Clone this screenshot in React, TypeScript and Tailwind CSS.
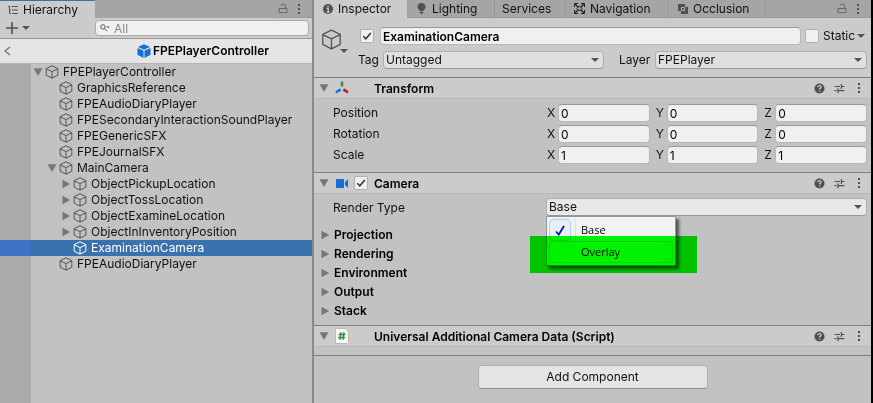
import { useState } from "react";
import type { ReactNode } from "react";

type IconProps = { className?: string };

function CubeIcon({ className = "" }: IconProps) {
  return (
    <svg viewBox="0 0 14 14" fill="none" stroke="currentColor" strokeLinejoin="round" className={"shrink-0 " + className}>
      <path d="M7 0.8 12.8 3.6V10.2L7 13.2 1.2 10.2V3.6ZM1.2 3.8 7 6.6 12.8 3.8M7 6.6V13" />
    </svg>
  );
}

function PrefabIcon() {
  return (
    <svg viewBox="0 0 14 14" className="size-3.5 shrink-0">
      <path d="M7 0.3 13 3 7 5.8 1 3ZM0.5 4 6.5 6.7V14L0.5 10.8ZM13.5 4 7.5 6.7V14L13.5 10.8Z" fill="#1470d0" />
    </svg>
  );
}

function Caret({ className = "" }: IconProps) {
  return (
    <svg viewBox="0 0 8 4" className={"h-1 w-2 shrink-0 " + className}>
      <path d="M0 0H8L4 4Z" fill="#555" />
    </svg>
  );
}

function Triangle({ open, className = "" }: { open: boolean; className?: string }) {
  return (
    <svg viewBox="0 0 10 10" className={"size-2.5 shrink-0 " + className}>
      <path d={open ? "M0.5 1.2H9.5L5 9Z" : "M1.5 0.8V9.2L9.2 5Z"} fill="#777" />
    </svg>
  );
}

function LockIcon() {
  return (
    <svg viewBox="0 0 10 11" fill="none" stroke="#666" className="h-[11px] w-2.5">
      <path d="M1 5.5H9V9.7H1ZM7.6 5.5V3Q7.6 1 5.4 1 3.4 1 3.2 2.6" />
    </svg>
  );
}

function DotsIcon() {
  return (
    <svg viewBox="0 0 4 12" fill="#505050" className="h-3 w-1">
      <path d="M1 1H3V3H1ZM1 5H3V7H1ZM1 9H3V11H1Z" />
    </svg>
  );
}

function HelpIcon() {
  return (
    <svg viewBox="0 0 11 11" className="size-[11px]">
      <circle cx="5.5" cy="5.5" r="5" fill="#505050" />
      <path d="M3.8 4.2Q3.9 2.7 5.5 2.7 7.2 2.7 7.2 4.1 7.2 5 5.6 5.6V6.6M5.6 7.6V8.7" fill="none" stroke="#cbcbcb" strokeWidth="1.2" />
    </svg>
  );
}

function PresetIcon() {
  return (
    <svg viewBox="0 0 11 11" fill="none" stroke="#505050" strokeWidth="1.2" className="size-[11px]">
      <path d="M0.5 3.5H6M9 3.5H10.5M7.4 1V6M7.4 3.5H9M0.5 7.7H2.5M4 7.7H10.5M4 5.2V10.2" />
    </svg>
  );
}

function IconButton({ label, className = "", children }: { label: string; className?: string; children: ReactNode }) {
  return (
    <button type="button" aria-label={label} className={"flex items-center justify-center " + className}>
      {children}
    </button>
  );
}

type Node = { name: string; depth: number; fold?: "open" | "closed"; selected?: boolean };

const nodes: Node[] = [
  { name: "FPEPlayerController", depth: 0, fold: "open" },
  { name: "GraphicsReference", depth: 1 },
  { name: "FPEAudioDiaryPlayer", depth: 1 },
  { name: "FPESecondaryInteractionSoundPlayer", depth: 1 },
  { name: "FPEGenericSFX", depth: 1 },
  { name: "FPEJournalSFX", depth: 1 },
  { name: "MainCamera", depth: 1, fold: "open" },
  { name: "ObjectPickupLocation", depth: 2, fold: "closed" },
  { name: "ObjectTossLocation", depth: 2, fold: "closed" },
  { name: "ObjectExamineLocation", depth: 2, fold: "closed" },
  { name: "ObjectInInventoryPosition", depth: 2, fold: "closed" },
  { name: "ExaminationCamera", depth: 2, selected: true },
  { name: "FPEAudioDiaryPlayer", depth: 1 },
];

const indents = ["pl-0", "pl-3.5", "pl-7"];

function TreeRow({ node }: { node: Node }) {
  return (
    <li className={"flex h-4 " + (node.selected ? "bg-[#3a72b0] text-white" : "")}>
      <span className={"w-[31px] shrink-0 " + (node.selected ? "bg-[#3c73c4]" : "bg-[#aaaaaa]")} />
      <span className={"flex items-center whitespace-nowrap " + indents[node.depth]}>
        <span className="flex w-3.5 justify-end">{node.fold && <Triangle open={node.fold === "open"} className="mr-0.5" />}</span>
        <CubeIcon className={"mr-1 size-3.5 " + (node.selected ? "text-white" : "text-[#555]")} />
        {node.name}
      </span>
    </li>
  );
}

function Hierarchy() {
  return (
    <section className="flex w-[314px] shrink-0 flex-col border-r-2 border-[#8a8a8a] bg-[#c2c2c2]">
      <header className="flex h-[18px] items-stretch bg-[#a5a5a5]">
        <button type="button" className="flex w-[95px] items-center gap-[5px] border-t border-[#3a72b0] bg-[#cbcbcb] pl-2">
          <svg viewBox="0 0 10 10" fill="none" stroke="#555" className="size-2.5">
            <path d="M0 1.5H2M3.5 1.5H10M1.5 2V8.5H3M4 5H10M4 8.5H10M1.5 5H3" />
          </svg>
          Hierarchy
        </button>
        <div className="ml-auto flex items-center gap-[9px] border-b border-[#999] pr-[11px]">
          <IconButton label="Lock"><LockIcon /></IconButton>
          <IconButton label="Hierarchy options"><DotsIcon /></IconButton>
        </div>
      </header>
      <div className="flex h-[21px] items-center border-b border-[#999] bg-[#cbcbcb] pr-[3px] pl-1.5">
        <button type="button" aria-label="Create" className="flex w-[89px] items-center gap-1">
          <svg viewBox="0 0 12 12" stroke="#505050" strokeWidth="1.6" className="size-3">
            <path d="M6 0V12M0 6H12" />
          </svg>
          <Caret />
        </button>
        <label className="flex h-4 min-w-0 flex-1 items-center gap-1 rounded border border-[#aaa] bg-[#f0f0f0] px-1">
          <svg viewBox="0 0 10 8" fill="none" stroke="#555" className="h-2 w-2.5 shrink-0">
            <circle cx="2.9" cy="2.9" r="2.2" />
            <path d="M4.5 4.5 7 7.3" />
            <path d="M6.5 2.5H9.8L8.2 4.2Z" fill="#555" stroke="none" />
          </svg>
          <input aria-label="Search hierarchy" placeholder="All" className="min-w-0 flex-1 bg-transparent text-xs leading-3 outline-none placeholder:text-[#888]" />
        </label>
      </div>
      <div className="flex h-[25px] items-center border-b border-[#b5b5b5] bg-[#e5e5e5] pl-1 font-semibold text-black">
        <button type="button" aria-label="Back" className="w-[90px]">
          <svg viewBox="0 0 7 10" fill="none" stroke="#777" strokeWidth="1.3" className="h-2.5 w-[7px]">
            <path d="M6 1 1 5 6 9" />
          </svg>
        </button>
        <div className="flex flex-1 items-center justify-center gap-0.5">
          <PrefabIcon />
          FPEPlayerController
        </div>
      </div>
      <ul>
        {nodes.map((n, i) => (
          <TreeRow key={i} node={n} />
        ))}
      </ul>
      <div className="w-[31px] flex-1 bg-[#aaaaaa]" />
    </section>
  );
}

function CheckBox({ label, defaultChecked = false }: { label: string; defaultChecked?: boolean }) {
  return (
    <span className="grid size-3.5 shrink-0">
      <input
        type="checkbox"
        aria-label={label}
        defaultChecked={defaultChecked}
        className="peer col-start-1 row-start-1 size-3.5 appearance-none rounded-xs border border-[#b0b0b0] bg-[#f0f0f0]"
      />
      <svg viewBox="0 0 14 14" fill="none" stroke="#333" strokeWidth="1.5" className="pointer-events-none invisible col-start-1 row-start-1 size-3.5 peer-checked:visible">
        <path d="M3.3 7.2 5.8 9.8 10.8 4" />
      </svg>
    </span>
  );
}

function DropDown({ id, value, options, tone }: { id: string; value: string; options: string[]; tone: string }) {
  return (
    <span className="grid min-w-0 flex-1 items-center">
      <select
        id={id}
        defaultValue={value}
        className={"col-start-1 row-start-1 h-[18px] w-full appearance-none rounded-sm border border-[#b0b0b0] border-b-[#989898] pr-5 pl-0.5 leading-4 " + tone}
      >
        {options.map((o) => (
          <option key={o}>{o}</option>
        ))}
      </select>
      <Caret className="pointer-events-none col-start-1 row-start-1 mr-[5px] justify-self-end" />
    </span>
  );
}

function Tab({ icon, label, className }: { icon?: ReactNode; label: string; className: string }) {
  return (
    <button type="button" className={"flex shrink-0 items-center whitespace-nowrap " + className}>
      {icon}
      {label}
    </button>
  );
}

function InspectorTabs() {
  return (
    <header className="flex h-[18px] items-stretch bg-[#a5a5a5]">
      <Tab
        label="Inspector"
        className="w-[93px] gap-[5px] bg-[#cbcbcb] pl-[9px]"
        icon={
          <svg viewBox="0 0 10 10" className="size-2.5">
            <circle cx="5" cy="5" r="5" fill="#505050" />
            <path d="M5 1.5V3.2M3.8 4.5H5.2V8M3.7 8H6.5" fill="none" stroke="#cbcbcb" strokeWidth="1.3" />
          </svg>
        }
      />
      <Tab
        label="Lighting"
        className="w-[88px] gap-1.5 border-r border-b border-[#999] pl-2.5"
        icon={
          <svg viewBox="0 0 9 11" fill="#505050" className="h-[11px] w-[9px]">
            <path d="M4.5 0A3.8 3.8 0 0 1 6.4 7.2V8.2H2.6V7.2A3.8 3.8 0 0 1 4.5 0ZM2.8 9H6.2V10H5.5V11H3.5V10H2.8Z" />
          </svg>
        }
      />
      <Tab label="Services" className="w-[71px] border-r border-b border-[#999] pl-[7px]" />
      <Tab
        label="Navigation"
        className="w-[102px] gap-[5px] border-r border-b border-[#999] pl-2"
        icon={
          <svg viewBox="0 0 11 11" fill="none" stroke="#222" className="size-[11px]">
            <path d="M1 1 10 10M10 1 1 10" strokeWidth="1.3" />
            <path d="M0.5 4V0.5H4M7 0.5H10.5V4M10.5 7V10.5H7M4 10.5H0.5V7" />
            <path d="M5.5 3 8 5.5 5.5 8 3 5.5Z" fill="#a5a5a5" />
          </svg>
        }
      />
      <Tab
        label="Occlusion"
        className="w-[98px] gap-[5px] border-r border-b border-[#999] pl-2.5"
        icon={
          <svg viewBox="0 0 10 10" className="size-2.5">
            <path d="M0 0H7V3H10V10H3V7H0Z" fill="#505050" />
            <path d="M3.5 6.5V3.5H6.5V6.5Z" fill="#505050" stroke="#b5b5b5" />
          </svg>
        }
      />
      <div className="flex flex-1 items-center justify-end gap-[9px] border-b border-[#999] pr-[11px]">
        <IconButton label="Lock inspector"><LockIcon /></IconButton>
        <IconButton label="Inspector options"><DotsIcon /></IconButton>
      </div>
    </header>
  );
}

function ObjectHeader() {
  return (
    <div className="flex h-[59px] gap-2.5 bg-[#cbcbcb] pt-[9px] pr-1 pl-[7px]">
      <div className="flex w-[27px] shrink-0 items-start pt-0.5">
        <CubeIcon className="size-[21px] text-[#555] [stroke-width:0.9]" />
        <Caret className="mt-5 -ml-0.5" />
      </div>
      <div className="flex min-w-0 flex-1 flex-col gap-[6px]">
        <div className="flex items-center">
          <span className="ml-0.5 flex w-5">
            <CheckBox label="Active" defaultChecked />
          </span>
          <input
            aria-label="Object name"
            defaultValue="ExaminationCamera"
            className="h-[18px] min-w-0 flex-1 rounded-sm border border-[#b8b8b8] border-t-[#999] bg-[#f0f0f0] px-0.5 font-semibold text-black"
          />
          <span className="flex w-[66px] items-center gap-1 pl-1">
            <CheckBox label="Static" />
            Static
            <Caret className="-ml-0.5" />
          </span>
        </div>
        <div className="flex items-center">
          <label htmlFor="tag" className="w-[25px] shrink-0">Tag</label>
          <DropDown id="tag" value="Untagged" options={["Untagged", "MainCamera", "Player"]} tone="bg-[#dfdfdf]" />
          <label htmlFor="layer" className="w-[51px] shrink-0 pl-[15px]">Layer</label>
          <span className="flex w-[212px] shrink-0">
            <DropDown id="layer" value="FPEPlayer" options={["FPEPlayer", "Default"]} tone="bg-[#dfdfdf]" />
          </span>
        </div>
      </div>
    </div>
  );
}

function ComponentHeader({ title, icon, toggle = false }: { title: string; icon: ReactNode; toggle?: boolean }) {
  return (
    <div className="flex h-[22px] items-center border-t border-b border-t-[#808080] border-b-[#b8b8b8] bg-[#cbcbcb] pr-0.5 pl-[5px]">
      <Triangle open />
      <span className="flex w-[25px] shrink-0 items-center justify-center">{icon}</span>
      <span className="flex w-5 shrink-0">{toggle && <CheckBox label={title + " enabled"} defaultChecked />}</span>
      <h2 className="flex-1 pt-0.5 font-semibold text-black">{title}</h2>
      <IconButton label="Help" className="w-5"><HelpIcon /></IconButton>
      <IconButton label="Presets" className="w-5"><PresetIcon /></IconButton>
      <IconButton label="More" className="w-5"><DotsIcon /></IconButton>
    </div>
  );
}

const vectors = [
  { name: "Position", value: "0" },
  { name: "Rotation", value: "0" },
  { name: "Scale", value: "1" },
];

function VectorRow({ name, value }: { name: string; value: string }) {
  return (
    <div className="flex items-center">
      <span className="w-[214px] shrink-0">{name}</span>
      <div className="grid flex-1 grid-cols-3 gap-1.5">
        {["X", "Y", "Z"].map((axis) => (
          <label key={axis} className="flex min-w-0 items-center">
            <span className="w-[11px] shrink-0">{axis}</span>
            <input
              aria-label={name + " " + axis}
              defaultValue={value}
              className="h-[18px] w-full min-w-0 rounded-sm border border-[#b8b8b8] border-t-[#999] bg-[#f0f0f0] px-0.5 text-black"
            />
          </label>
        ))}
      </div>
    </div>
  );
}

function RenderTypeMenu() {
  return (
    <div className="absolute top-full left-0 w-[130px] border border-[#979797] bg-[#f2f2f2] p-0.5 font-['Open_Sans','Noto_Sans',sans-serif] text-[11px] text-black shadow-[3px_3px_3px_rgba(0,0,0,0.6)]">
      <button type="button" className="flex h-[22px] w-full items-center">
        <span className="flex size-[22px] items-center justify-center rounded-sm border border-[#aecff7] bg-[#e6eff8]">
          <svg viewBox="0 0 10 11" fill="none" stroke="#0c12a1" strokeWidth="1.8" className="h-[11px] w-2.5">
            <path d="M1 6.5 3.8 9.5 9 1" />
          </svg>
        </span>
        <span className="ml-1 h-full border-l border-[#e0e0e0] pl-[5px] leading-[22px]">Base</span>
      </button>
      <button type="button" className="flex h-[22px] w-full items-center rounded-sm border border-[#b5d5f5] pl-[31px]">Overlay</button>
    </div>
  );
}

function RenderType() {
  return (
    <div className="flex items-center pt-1 pr-1 pl-[19px]">
      <label htmlFor="render" className="w-[213px] shrink-0 pt-0.5">Render Type</label>
      <div className="relative flex min-w-0 flex-1">
        <DropDown id="render" value="Base" options={["Base", "Overlay"]} tone="bg-[#e8e8e8]" />
        <RenderTypeMenu />
        <div className="pointer-events-none absolute top-[38px] -left-4 h-[37px] w-[167px] bg-[#00ff00] mix-blend-multiply" />
      </div>
    </div>
  );
}

function Foldout({ name }: { name: string }) {
  const [open, setOpen] = useState(false);
  return (
    <button type="button" onClick={() => setOpen(!open)} className="flex h-[19px] items-center gap-1 font-semibold text-black">
      <Triangle open={open} />
      {name}
    </button>
  );
}

function Inspector() {
  return (
    <section className="flex min-w-0 flex-1 flex-col border-r-2 border-black bg-[#c2c2c2]">
      <InspectorTabs />
      <ObjectHeader />
      <ComponentHeader
        title="Transform"
        icon={
          <svg viewBox="0 0 14 14" fill="none" strokeWidth="2.6" className="size-3.5">
            <path d="M7 0.5V5.5" stroke="#3d8b40" />
            <path d="M5.6 8.4 1 11.4" stroke="#1b72d8" />
            <path d="M8.4 8.4 13 11.4" stroke="#c02020" />
          </svg>
        }
      />
      <div className="flex flex-col gap-[3px] pt-[5px] pr-1 pb-2 pl-[19px]">
        {vectors.map((v) => (
          <VectorRow key={v.name} name={v.name} value={v.value} />
        ))}
      </div>
      <ComponentHeader
        title="Camera"
        toggle
        icon={
          <svg viewBox="0 0 12 9" fill="#1470d0" className="h-[9px] w-3">
            <path d="M0.6 0H7.4Q8 0 8 0.6V8.4Q8 9 7.4 9H0.6Q0 9 0 8.4V0.6Q0 0 0.6 0ZM9 3 12 0.3V8.7L9 6Z" />
          </svg>
        }
      />
      <RenderType />
      <div className="flex flex-col items-start pt-[9px] pb-[5px] pl-1.5">
        {["Projection", "Rendering", "Environment", "Output", "Stack"].map((f) => (
          <Foldout key={f} name={f} />
        ))}
      </div>
      <ComponentHeader
        title="Universal Additional Camera Data (Script)"
        icon={
          <svg viewBox="0 0 14 16" className="h-4 w-3.5">
            <path d="M1.5 0.5H10L13.5 4V14.5Q13.5 15.5 12.5 15.5H1.5Q0.5 15.5 0.5 14.5V1.5Q0.5 0.5 1.5 0.5Z" fill="#fafafa" stroke="#bbb" />
            <path d="M6 4 5 12M9 4 8 12M3.5 6.5H10.5M3.2 9.5H10.2" fill="none" stroke="#2e8b3a" strokeWidth="1.3" />
          </svg>
        }
      />
      <div className="flex flex-1 flex-col">
        <div className="h-[9px] border-b border-[#808080]" />
        <button type="button" className="mt-[9px] h-6 w-[230px] self-center rounded-sm border border-[#b0b0b0] border-b-[#909090] bg-[#e4e4e4]">
          Add Component
        </button>
      </div>
    </section>
  );
}

export default function App() {
  return (
    <main className="flex min-h-screen bg-[#c2c2c2] font-[Inter,'Liberation_Sans',sans-serif] text-xs leading-4 text-[#111]">
      <Hierarchy />
      <Inspector />
    </main>
  );
}
